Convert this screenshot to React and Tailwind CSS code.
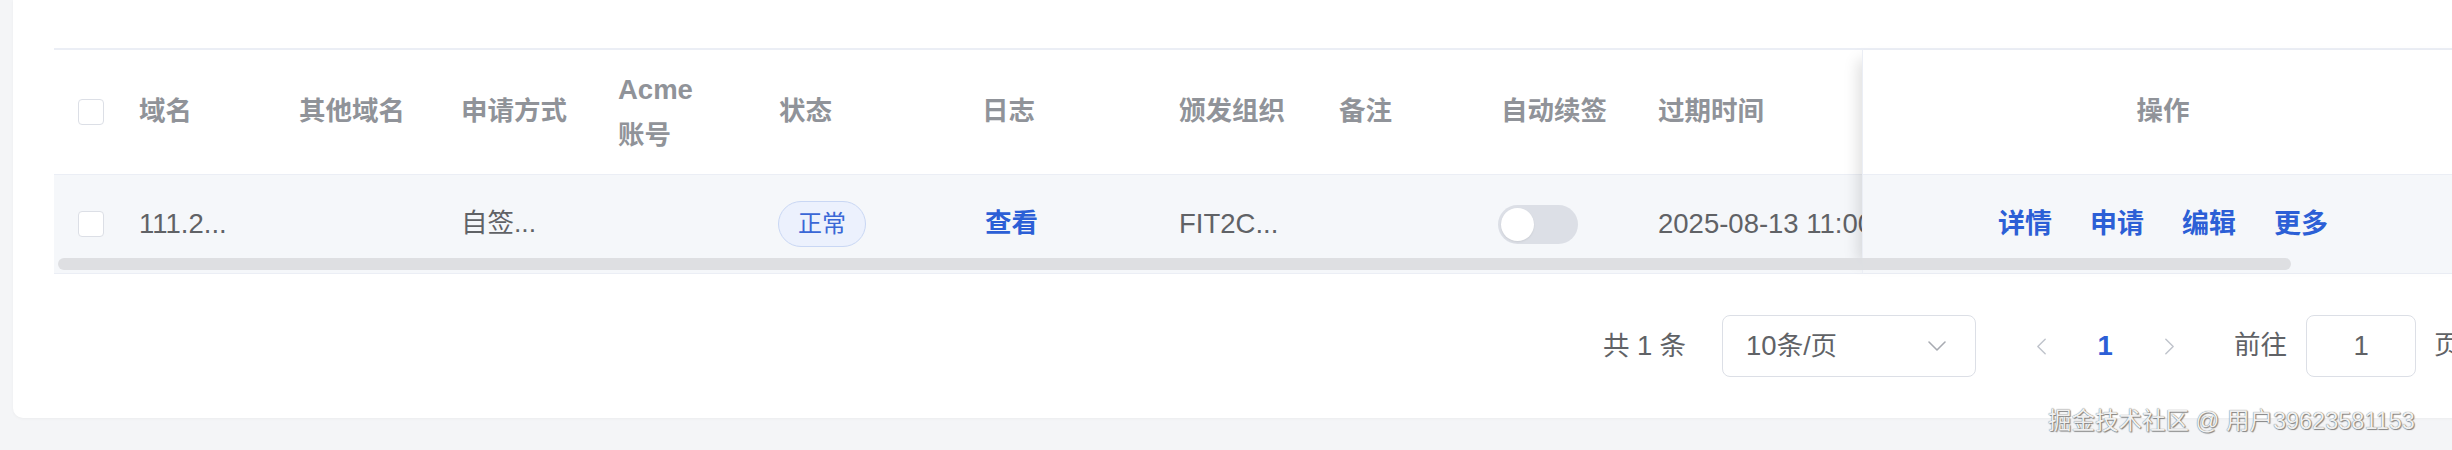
import React from "react";

const FONT = "font-['Liberation_Sans','Noto_Sans_CJK_SC',sans-serif]";

function Checkbox() {
  return <div className="w-[26px] h-[26px] rounded-[4px] border-[1.5px] border-[#dcdfe6] bg-white" />;
}

function Chevron({ dir = "down", className = "" }) {
  const pts =
    dir === "down" ? "2,2 10,10 18,2" : dir === "left" ? "10,2 2,10 10,18" : "2,2 10,10 2,18";
  const vb = dir === "down" ? "0 0 20 12" : "0 0 12 20";
  return (
    <svg viewBox={vb} className={className} fill="none" stroke="currentColor" strokeWidth="1.6" strokeLinecap="round" strokeLinejoin="round">
      <polyline points={pts} />
    </svg>
  );
}

const latin = "text-[27.5px]";

const columns = [
  { w: "w-[63px]", pad: "pl-[24px]", head: <Checkbox />, body: <Checkbox /> },
  { w: "w-[160px]", pad: "pl-[22px]", head: "域名", body: <span className={latin}>111.2...</span> },
  { w: "w-[162px]", pad: "pl-[22px]", head: "其他域名", body: "" },
  { w: "w-[157px]", pad: "pl-[22px]", head: "申请方式", body: "自签..." },
  {
    w: "w-[161px]",
    pad: "pl-[22px]",
    head: (
      <span className="leading-[45px]">
        <span className="text-[27.5px]">Acme</span>
        <br />
        账号
      </span>
    ),
    body: "",
  },
  {
    w: "w-[203px]",
    pad: "pl-[21px]",
    head: <span className="pl-[1px]">状态</span>,
    body: (
      <span className="flex items-center justify-center w-[88px] h-[46px] rounded-full border border-[#c9d7f4] bg-[#ecf1fd] text-[24px] text-[#3a67d6]">
        正常
      </span>
    ),
  },
  {
    w: "w-[197px]",
    pad: "pl-[22px]",
    head: "日志",
    body: <span className="ml-[3px] font-bold text-[#2c5fd6]">查看</span>,
  },
  { w: "w-[160px]", pad: "pl-[22px]", head: "颁发组织", body: <span className={latin}>FIT2C...</span> },
  { w: "w-[162px]", pad: "pl-[22px]", head: "备注", body: "" },
  {
    w: "w-[157px]",
    pad: "pl-[22px]",
    head: "自动续签",
    body: (
      <span className="ml-[-3px] flex items-center w-[80px] h-[39px] rounded-full bg-[#dcdfe6]">
        <span className="ml-[3px] w-[33px] h-[33px] rounded-full bg-white shadow-[0_1px_2px_rgba(0,0,0,0.08)]" />
      </span>
    ),
  },
  { w: "w-[340px]", pad: "pl-[22px]", head: "过期时间", body: <span className={latin}>2025-08-13 11:00:00</span> },
];

export default function App() {
  return (
    <div className={`relative w-[2452px] h-[450px] overflow-hidden bg-[#f4f5f7] ${FONT}`}>
      <div className="ml-[13px] w-[2520px] h-[418px] bg-white rounded-bl-[10px] shadow-[0_1px_3px_rgba(0,0,0,0.04)] pt-[48px]">
        {/* table */}
        <div className="relative ml-[41px] w-[2440px] border-t-2 border-b border-[#ebeef5] flex">
          {/* scrolling part */}
          <div className="w-[1808px] shrink-0 overflow-hidden flex flex-col">
            <div className="flex h-[125px] border-b border-[#ebeef5] bg-white">
              {columns.map((c, i) => (
                <div
                  key={i}
                  className={`${c.w} ${c.pad} shrink-0 flex items-center whitespace-nowrap text-[26.5px] font-bold text-[#909399]`}
                >
                  {c.head}
                </div>
              ))}
            </div>
            <div className="flex h-[98px] bg-[#f5f7fa]">
              {columns.map((c, i) => (
                <div
                  key={i}
                  className={`${c.w} ${c.pad} shrink-0 flex items-center whitespace-nowrap text-[26.5px] text-[#606266]`}
                >
                  {c.body}
                </div>
              ))}
            </div>
          </div>
          {/* fixed right column */}
          <div className="relative z-10 w-[632px] shrink-0 flex flex-col border-l border-[#ebeef5] shadow-[-14px_0_14px_-10px_rgba(0,0,0,0.13)]">
            <div className="h-[125px] border-b border-[#ebeef5] bg-white flex items-center">
              <div className="w-[600px] text-center text-[26.5px] font-bold text-[#909399]">操作</div>
            </div>
            <div className="h-[98px] bg-[#f5f7fa] flex items-center">
              <div className="w-[600px] flex justify-center gap-[38px] text-[27px] font-bold text-[#2c5fd6]">
                <span>详情</span>
                <span>申请</span>
                <span>编辑</span>
                <span>更多</span>
              </div>
            </div>
          </div>
          {/* horizontal scrollbar overlay */}
          <div className="absolute z-20 left-[4px] top-[208px] w-[2233px] h-[12px] rounded-full bg-[#dcdde0] opacity-95" />
        </div>

        {/* pagination */}
        <div className="mt-[41px] pl-[1590px] flex items-center h-[62px] whitespace-nowrap text-[26.5px] text-[#606266]">
          <span>
            共 <span className="text-[27.5px]">1</span> 条
          </span>
          <div className="ml-[36px] w-[254px] h-[62px] rounded-[8px] border-[1.5px] border-[#dcdfe6] flex items-center justify-between pl-[23px] pr-[28px]">
            <span className="text-[#606266]">
              <span className="text-[27.5px]">10</span>条/页
            </span>
            <Chevron dir="down" className="w-[20px] h-[12px] text-[#a8abb2]" />
          </div>
          <div className="ml-[33px] w-[64px] flex justify-center">
            <Chevron dir="left" className="w-[11px] h-[19px] text-[#c0c4cc]" />
          </div>
          <div className="w-[64px] text-center text-[27.5px] font-bold text-[#2c5fd6]">1</div>
          <div className="w-[64px] flex justify-center">
            <Chevron dir="right" className="w-[11px] h-[19px] text-[#c0c4cc]" />
          </div>
          <span className="ml-[33px]">前往</span>
          <div className="ml-[19px] w-[110px] h-[62px] rounded-[8px] border-[1.5px] border-[#dcdfe6] flex items-center justify-center text-[27.5px]">
            1
          </div>
          <span className="ml-[18px]">页</span>
        </div>
      </div>

      {/* watermark */}
      <div className="absolute left-[2048px] top-[405px] whitespace-nowrap text-[23.5px] leading-[32px] text-[#f0f0f0] [text-shadow:0_0_1px_#555,1px_1px_1px_#888]">
        掘金技术社区 @ 用户39623581153
      </div>
    </div>
  );
}
